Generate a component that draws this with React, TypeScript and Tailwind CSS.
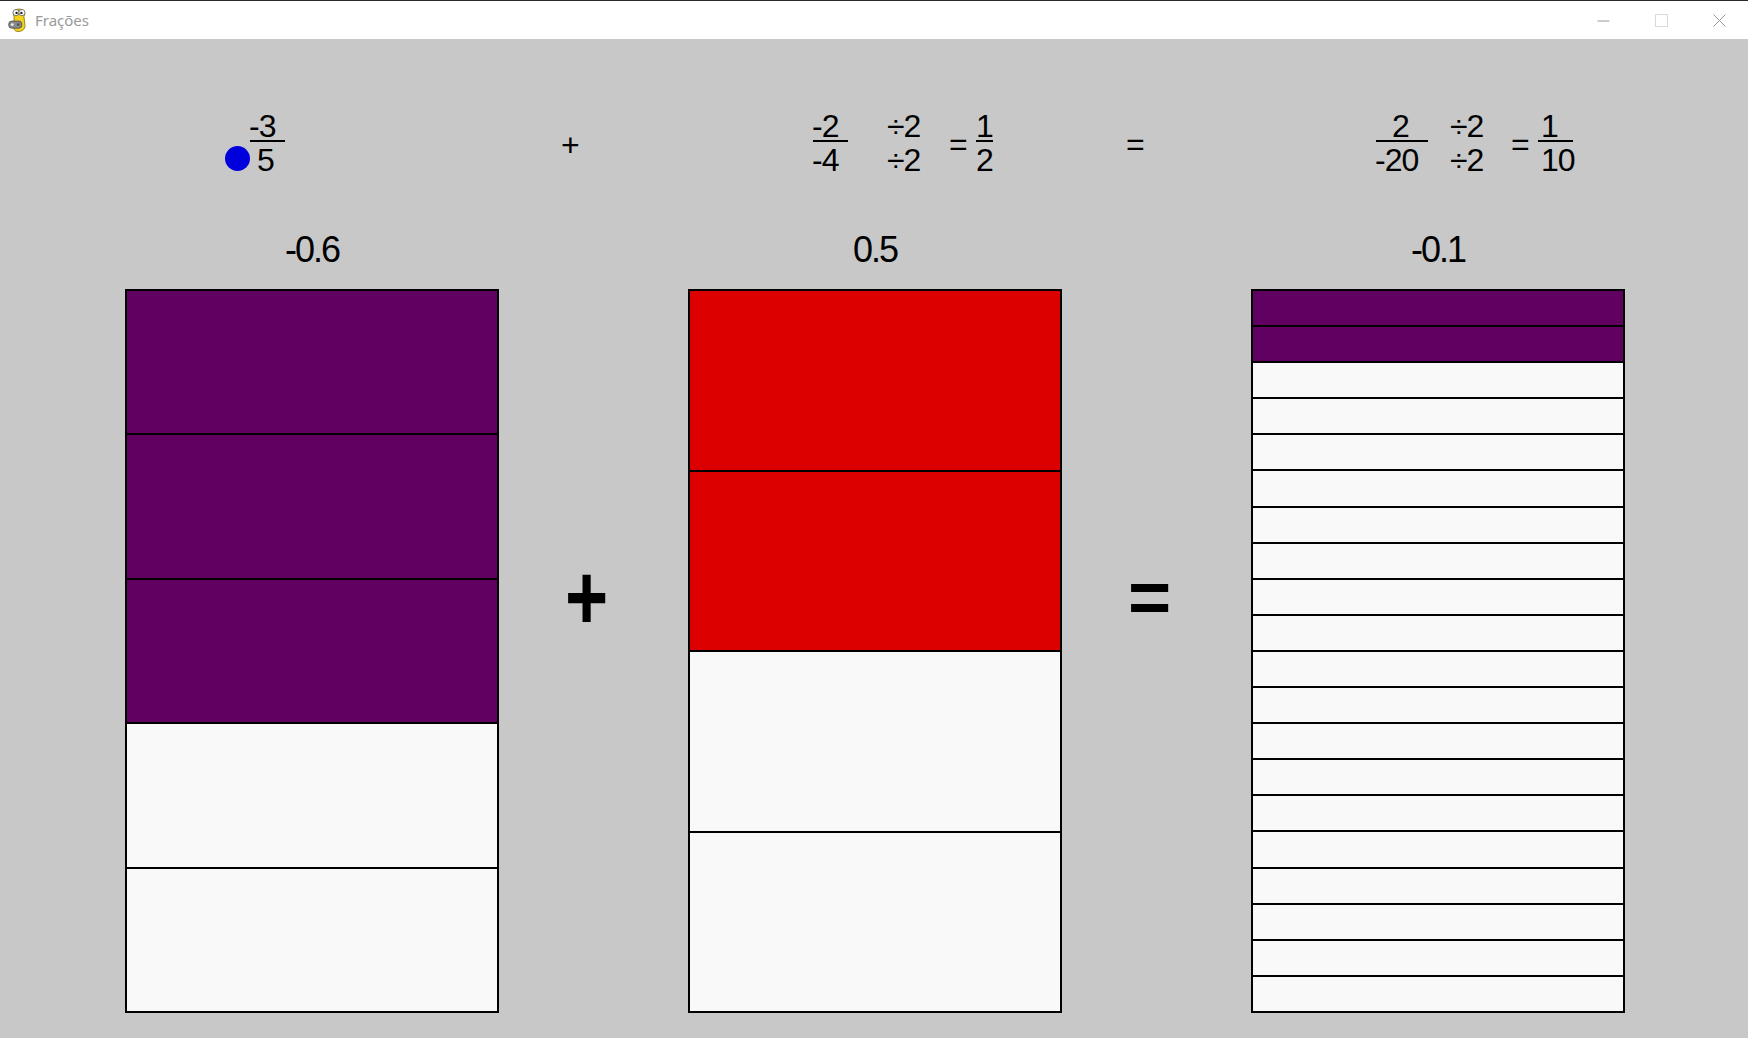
import React from "react";

const PURPLE = "bg-[#600060]";
const RED = "bg-[#dc0000]";
const EMPTY = "bg-[#f9f9f9]";

function PygameIcon() {
  return (
    <svg width="22" height="24" viewBox="0 0 20 22">
      <path d="M5.5 8 C3.5 4 5.5 1 10 1 C14.5 1 16.5 4 14.5 8 L15.5 16 C15.5 20 12.5 21.5 9 21.5 C6 21.5 4.5 19 5.5 16 Z" fill="#f2d21b" stroke="#8a7a10" strokeWidth="0.8" />
      <circle cx="7.3" cy="4.2" r="2.8" fill="#fff" stroke="#555" strokeWidth="0.7" />
      <circle cx="12.7" cy="4.2" r="2.8" fill="#fff" stroke="#555" strokeWidth="0.7" />
      <circle cx="7.8" cy="4.5" r="1.1" fill="#222" />
      <circle cx="12.2" cy="4.5" r="1.1" fill="#222" />
      <rect x="0.6" y="12" width="12" height="6.5" rx="2.8" fill="#8a8a8a" stroke="#444" strokeWidth="0.7" />
      <circle cx="3.8" cy="15.2" r="1.3" fill="#eee" />
      <circle cx="9.3" cy="15.2" r="1.3" fill="#555" />
    </svg>
  );
}

function TitleBar() {
  return (
    <div className="flex h-[39px] items-center border-t border-[#2b2b2b] bg-white">
      <div className="ml-[8px] flex items-center">
        <PygameIcon />
      </div>
      <span className="ml-[5px] text-[15px] text-[#9a9a9a] [font-family:'Noto_Sans','Open_Sans',sans-serif]">
        Frações
      </span>
      <div className="ml-auto flex h-full">
        <div className="flex h-full w-[58px] items-center justify-center">
          <svg width="13" height="13" viewBox="0 0 13 13">
            <line x1="0.5" y1="7" x2="12.5" y2="7" stroke="#9a9a9a" strokeWidth="1" />
          </svg>
        </div>
        <div className="flex h-full w-[58px] items-center justify-center">
          <svg width="13" height="13" viewBox="0 0 13 13">
            <rect x="0.5" y="0.5" width="12" height="12" fill="none" stroke="#dadada" strokeWidth="1" />
          </svg>
        </div>
        <div className="flex h-full w-[58px] items-center justify-center">
          <svg width="13" height="13" viewBox="0 0 13 13">
            <line x1="0.5" y1="0.5" x2="12.5" y2="12.5" stroke="#9a9a9a" strokeWidth="1" />
            <line x1="12.5" y1="0.5" x2="0.5" y2="12.5" stroke="#9a9a9a" strokeWidth="1" />
          </svg>
        </div>
      </div>
    </div>
  );
}

type FracProps = {
  num: string;
  den: string;
  width: number;
  numClass?: string;
  denClass?: string;
  line?: boolean;
};

// numerator / line / denominator, 32px digits
function Frac({ num, den, width, numClass = "", denClass = "", line = true }: FracProps) {
  return (
    <div className="flex flex-col" style={{ width }}>
      <div className={"h-[24px] whitespace-nowrap text-[32px] leading-[24px] tracking-[-1px] " + numClass}>{num}</div>
      <div className={"mt-[2px] h-[2px] " + (line ? "bg-black" : "")} />
      <div className={"mt-[6px] h-[24px] whitespace-nowrap text-[32px] leading-[24px] tracking-[-1px] " + denClass}>{den}</div>
    </div>
  );
}

function Op({ children }: { children: React.ReactNode }) {
  return <div className="h-[24px] text-[32px] leading-[24px]">{children}</div>;
}

function Bar({ parts, filled, color }: { parts: number; filled: number; color: string }) {
  return (
    <div className="flex h-[724px] w-[374px] flex-col gap-[2px] border-2 border-black bg-black">
      {Array.from({ length: parts }).map((_, i) => (
        <div key={i} className={"flex-1 " + (i < filled ? color : EMPTY)} />
      ))}
    </div>
  );
}

function BigOp({ children, tall }: { children: React.ReactNode; tall?: boolean }) {
  return (
    <div className="ml-[68px] mt-[284px] flex h-[49px] w-[39px] items-center justify-center">
      <span className={"text-[74px] font-bold leading-none " + (tall ? "scale-y-[1.25]" : "")}>{children}</span>
    </div>
  );
}

export default function App() {
  return (
    <div className="h-[1038px] w-[1748px] overflow-hidden bg-[#c8c8c8] text-black [font-family:'Liberation_Sans',Arial,sans-serif]">
      <TitleBar />

      <div className="grid grid-cols-[125px_374px_189px_374px_189px_374px_1fr] grid-rows-[193px_57px_724px]">
        {/* equation row */}
        <div />
        <div className="flex items-end pl-[100px] pt-[75px] self-start">
          <div className="mb-[1px] h-[25px] w-[25px] rounded-full bg-[#0000dd]" />
          <Frac num="-3" den="5" width={35} numClass="-ml-[1px]" denClass="pl-[7px]" />
        </div>
        <div className="pl-[62px] pt-[94px]">
          <Op>+</Op>
        </div>
        <div className="flex items-start pl-[125px] pt-[75px]">
          <Frac num="-2" den="-4" width={35} numClass="-ml-[1px]" denClass="-ml-[1px]" />
          <div className="ml-[39px]">
            <Frac num="÷2" den="÷2" width={40} line={false} />
          </div>
          <div className="ml-[22px] mt-[18px] w-[18px]">
            <Op>=</Op>
          </div>
          <div className="ml-[9px]">
            <Frac num="1" den="2" width={17} numClass="text-center" denClass="text-center" />
          </div>
        </div>
        <div className="pl-[64px] pt-[93px]">
          <Op>=</Op>
        </div>
        <div className="flex items-start pl-[125px] pt-[75px]">
          <Frac num="2" den="-20" width={52} numClass="pl-[16px]" denClass="-ml-[1px]" />
          <div className="ml-[22px]">
            <Frac num="÷2" den="÷2" width={40} line={false} />
          </div>
          <div className="ml-[21px] mt-[18px] w-[18px]">
            <Op>=</Op>
          </div>
          <div className="ml-[9px]">
            <Frac num="1" den="10" width={35} numClass="pl-[3px]" denClass="pl-[3px]" />
          </div>
        </div>
        <div />

        {/* decimal values */}
        <div />
        <div className="h-[36px] text-center text-[36px] leading-[36px] tracking-[-2px]">-0.6</div>
        <div />
        <div className="h-[36px] text-center text-[36px] leading-[36px] tracking-[-2px]">0.5</div>
        <div />
        <div className="h-[36px] text-center text-[36px] leading-[36px] tracking-[-2px]">-0.1</div>
        <div />

        {/* bars */}
        <div />
        <Bar parts={5} filled={3} color={PURPLE} />
        <div>
          <BigOp tall>+</BigOp>
        </div>
        <Bar parts={4} filled={2} color={RED} />
        <div>
          <BigOp>=</BigOp>
        </div>
        <Bar parts={20} filled={2} color={PURPLE} />
        <div />
      </div>
    </div>
  );
}
